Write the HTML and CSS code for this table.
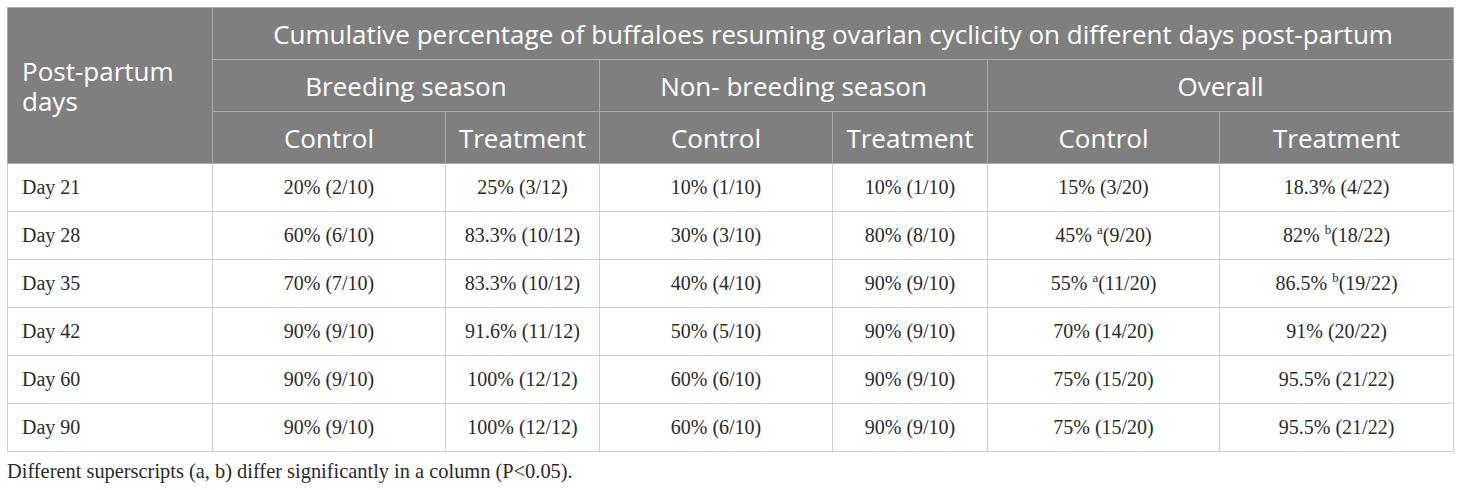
FILE: index.html
```html
<!DOCTYPE html>
<html>
<head>
<meta charset="utf-8">
<link rel="stylesheet" href="styles.css">
</head>
<body>
<div class="wrap">
<table class="data">
  <colgroup>
    <col style="width:205px"><col style="width:233px"><col style="width:154px"><col style="width:233px"><col style="width:155px"><col style="width:232px"><col style="width:234px">
  </colgroup>
  <thead>
    <tr>
      <th rowspan="3" class="first">Post-partum<br>days</th>
      <th colspan="6">Cumulative percentage of buffaloes resuming ovarian cyclicity on different days post-partum</th>
    </tr>
    <tr>
      <th colspan="2">Breeding season</th>
      <th colspan="2">Non- breeding season</th>
      <th colspan="2">Overall</th>
    </tr>
    <tr>
      <th>Control</th><th>Treatment</th><th>Control</th><th>Treatment</th><th>Control</th><th>Treatment</th>
    </tr>
  </thead>
  <tbody>
    <tr><td class="first">Day 21</td><td>20% (2/10)</td><td>25% (3/12)</td><td>10% (1/10)</td><td>10% (1/10)</td><td>15% (3/20)</td><td>18.3% (4/22)</td></tr>
    <tr><td class="first">Day 28</td><td>60% (6/10)</td><td>83.3% (10/12)</td><td>30% (3/10)</td><td>80% (8/10)</td><td>45% <sup>a</sup>(9/20)</td><td>82% <sup>b</sup>(18/22)</td></tr>
    <tr><td class="first">Day 35</td><td>70% (7/10)</td><td>83.3% (10/12)</td><td>40% (4/10)</td><td>90% (9/10)</td><td>55% <sup>a</sup>(11/20)</td><td>86.5% <sup>b</sup>(19/22)</td></tr>
    <tr><td class="first">Day 42</td><td>90% (9/10)</td><td>91.6% (11/12)</td><td>50% (5/10)</td><td>90% (9/10)</td><td>70% (14/20)</td><td>91% (20/22)</td></tr>
    <tr><td class="first">Day 60</td><td>90% (9/10)</td><td>100% (12/12)</td><td>60% (6/10)</td><td>90% (9/10)</td><td>75% (15/20)</td><td>95.5% (21/22)</td></tr>
    <tr><td class="first">Day 90</td><td>90% (9/10)</td><td>100% (12/12)</td><td>60% (6/10)</td><td>90% (9/10)</td><td>75% (15/20)</td><td>95.5% (21/22)</td></tr>
  </tbody>
</table>
<p class="note">Different superscripts (a, b) differ significantly in a column (P&lt;0.05).</p>
</div>
</body>
</html>
```
FILE: styles.css
```css
html, body {
  margin: 0;
  padding: 0;
  background: #ffffff;
}
.wrap {
  padding: 7px 7px 0 7px;
}
.data {
  border-collapse: collapse;
  table-layout: fixed;
  width: 1446px;
}
.data th {
  background: #7f7f7f;
  color: #ffffff;
  font-family: "Open Sans", "Noto Sans", sans-serif;
  font-weight: 400;
  font-size: 26px;
  line-height: 28px;
  height: 51px;
  padding: 0 4px;
  border: 1px solid #a9a9a9;
  text-align: center;
  vertical-align: middle;
}
.data th.first {
  text-align: left;
  padding-left: 14px;
  line-height: 30px;
}
.data td {
  font-family: "Liberation Serif", "Times New Roman", serif;
  font-size: 20px;
  color: #2a2a2a;
  height: 47px;
  padding: 0 6px;
  border: 1px solid #d0d0d0;
  text-align: center;
  vertical-align: middle;
}
.data td.first {
  text-align: left;
  padding-left: 14px;
}
.data sup {
  font-size: 13px;
  line-height: 0;
}
.note {
  margin: 8px 0 0 0;
  font-family: "Liberation Serif", "Times New Roman", serif;
  font-size: 20.4px;
  color: #2a2a2a;
}
```
